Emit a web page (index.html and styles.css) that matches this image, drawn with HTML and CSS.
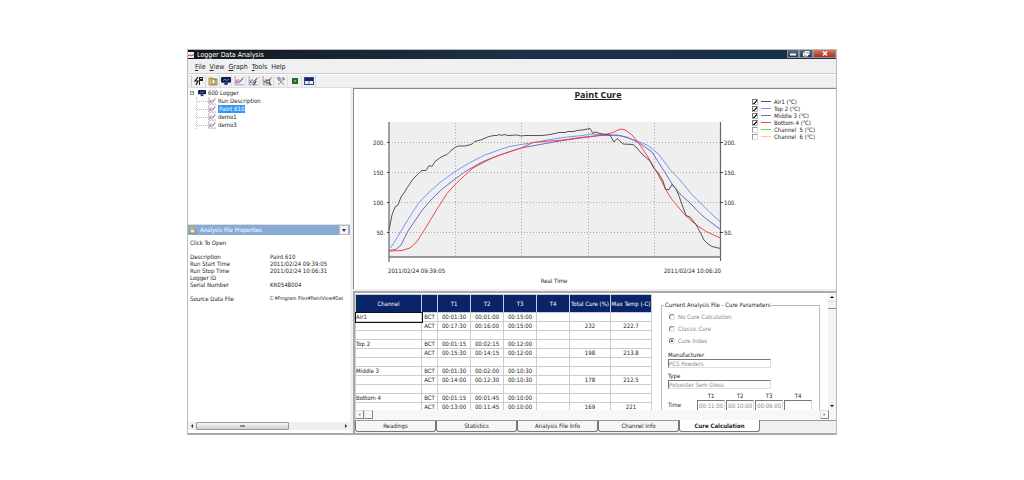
FILE: index.html
```html
<!DOCTYPE html>
<html lang="en">
<head>
    <meta charset="UTF-8">
    <meta name="viewport" content="width=device-width, initial-scale=1.0">
    <title>Logger Data Analysis</title>
    <link rel="stylesheet" href="styles.css">
</head>
<body>
    <svg class="defs" aria-hidden="true">
        <symbol id="graph" viewBox="0 0 9 9">
            <path d="M1 0v8h8" fill="none" stroke="#99a" stroke-width=".8" />
            <path d="M1.500 7l2-4 2 2 3-4" fill="none" stroke="#e06a5a" stroke-width=".9" />
            <path d="M1.500 4l2.500 2.500 4-4" fill="none" stroke="#4460cc" stroke-width=".9" />
        </symbol>
        <symbol id="logger" viewBox="0 0 9 9">
            <rect x="0" y="1" width="9" height="5" rx="1" fill="#111c50" />
            <path d="M2 4l1.500-1 1.500 1 2-1" fill="none" stroke="#5fc3a0" stroke-width=".8" />
            <path d="M3 6h3v2H3z" fill="#223070" />
        </symbol>
    </svg>

    <div class="window">
        <header class="title-bar">
            <svg class="app-icon" viewBox="0 0 6 6"><rect width="6" height="6" fill="#eef" /><path d="M0 4l2-1 2 1 2-2" fill="none" stroke="#c33" /></svg>
            <h1>Logger Data Analysis</h1>
            <div class="win-buttons">
                <button class="win-btn" aria-label="Minimize"><svg viewBox="0 0 8 7"><path d="M1 3.500h6v2H1z" fill="#fff" /></svg></button>
                <button class="win-btn restore" aria-label="Restore"><svg viewBox="0 0 8 7"><path d="M3 1.500h4v3H3zM1.500 3h4v3h-4z" fill="#889" stroke="#fff" /></svg></button>
                <button class="win-btn close" aria-label="Close"><svg viewBox="0 0 8 7"><path d="M2 1.500l4 4m0-4l-4 4" stroke="#fff" stroke-width="1.500" /></svg></button>
            </div>
        </header>

        <nav class="menu-bar">
            <a href="#"><u>F</u>ile</a>
            <a href="#"><u>V</u>iew</a>
            <a href="#"><u>G</u>raph</a>
            <a href="#"><u>T</u>ools</a>
            <a href="#">Help</a>
        </nav>

        <div class="toolbar">
            <button class="tool first" aria-label="Start"><svg viewBox="0 0 10 10"><path d="M4 1L1 5h3L2 9" fill="none" stroke="#111" stroke-width="1.200" /><path d="M5 1h4v4H6v4H5z" fill="#222" /><path d="M6.500 2h1.500v1H6.500z" fill="#fff" /></svg></button>
            <button class="tool" aria-label="Open"><svg viewBox="0 0 10 10"><path d="M1 2h3l1 1h4v6H1z" fill="#e9c763" stroke="#9a7a25" stroke-width=".8" /><rect x="4" y="3" width="3" height="5" fill="#fff" stroke="#555" stroke-width=".7" /></svg></button>
            <button class="tool plain" aria-label="Logger"><svg viewBox="0 0 9 9"><use href="#logger" /></svg></button>
            <button class="tool" aria-label="Graph"><svg viewBox="0 0 9 9"><use href="#graph" /></svg></button>
            <button class="tool" aria-label="Edit graph"><svg viewBox="0 0 9 9"><use href="#graph" /><path d="M5 8l2.500-3.500" stroke="#333" /></svg></button>
            <button class="tool" aria-label="Zoom graph"><svg viewBox="0 0 9 9"><use href="#graph" /><circle cx="5.500" cy="5" r="1.500" fill="#dde" stroke="#333" stroke-width=".8" /><path d="M6.500 6.500l1.500 1.500" stroke="#222" /></svg></button>
            <button class="tool" aria-label="Settings"><svg viewBox="0 0 10 10"><path d="M2 9l6-6M3 3l5 6" stroke="#888" /><path d="M1 2l2-1 2 2-2 2zM7 1l2 2-1 1-2-1z" fill="#9ab" stroke="#678" stroke-width=".5" /></svg></button>
            <button class="tool" aria-label="Stop"><svg viewBox="0 0 10 10"><rect x="2" y="2" width="6" height="6" fill="#246b2a" /><rect x="4" y="4" width="2" height="2" fill="#62b45e" /></svg></button>
            <button class="tool" aria-label="Window"><svg viewBox="0 0 10 10"><rect x=".5" y="1.500" width="9" height="7" fill="#e8ecfa" stroke="#34459c" /><path d="M1 2h8v3H1z" fill="#18246c" /><path d="M5 5v3" stroke="#6876b8" /></svg></button>
        </div>

        <main class="workspace">
            <aside class="sidebar">
                <ul class="tree">
                    <li>
                        <div class="tree-root"><span class="toggle">−</span><svg class="tree-icon"><use href="#logger" /></svg><span>600 Logger</span></div>
                        <ul>
                            <li><svg class="tree-icon"><use href="#graph" /></svg><span>Run Description</span></li>
                            <li><svg class="tree-icon"><use href="#graph" /></svg><span class="selected">Paint 610</span></li>
                            <li><svg class="tree-icon"><use href="#graph" /></svg><span>demo1</span></li>
                            <li><svg class="tree-icon"><use href="#graph" /></svg><span>demo3</span></li>
                        </ul>
                    </li>
                </ul>

                <section class="properties">
                    <div class="properties-head">
                        <svg viewBox="0 0 9 8"><path d="M2 3h5v4H2z" fill="#f1ead0" stroke="#77705a" stroke-width=".7" /><path d="M0 3l4-2 4 1-3 2z" fill="#dfa646" /></svg>
                        <h2>Analysis File Properties</h2>
                        <button class="drop" aria-label="Collapse"><svg viewBox="0 0 8 8"><path d="M2 3h4L4 6z" fill="#333" /></svg></button>
                    </div>
                    <div class="properties-body">
                        <p>Click To Open</p>
                        <dl>
                            <dt>Description</dt><dd>Paint 610</dd>
                            <dt>Run Start Time</dt><dd>2011/02/24 09:39:05</dd>
                            <dt>Run Stop Time</dt><dd>2011/02/24 10:06:31</dd>
                            <dt>Logger ID</dt><dd></dd>
                            <dt>Serial Number</dt><dd>KR0548004</dd>
                        </dl>
                        <dl>
                            <dt>Source Data File</dt><dd class="path">C:¥Program Files¥PaintView¥Dat</dd>
                        </dl>
                    </div>
                    <div class="side-scroll">
                        <svg viewBox="0 0 8 8"><path d="M5 2v4L3 4z" fill="#222" /></svg>
                        <div class="side-track"><div class="side-thumb"></div></div>
                        <svg viewBox="0 0 8 8"><path d="M3 2v4l2-2z" fill="#222" /></svg>
                    </div>
                </section>
            </aside>

            <div class="content">
                <section class="chart-panel">
                    <h2>Paint Cure</h2>
                    <svg class="chart" viewBox="354 101 398 188" role="img" aria-label="Paint Cure temperatures">
                        <rect x="389" y="122" width="332" height="135" fill="#efefef" />
                        <path class="grid" d="M389 142.500h332M389 172.500h332M389 202.500h332M389 232.500h332M455.500 123v134M521.500 123v134M588.500 123v134M654.500 123v134" />
                        <path d="M389 257h332" stroke="#777" stroke-width="1.500" />
                        <path d="M389 122v140M720.500 122v139" stroke="#666" stroke-width="1.200" />
                        <path d="M387 142.500h2M387 172.500h2M387 202.500h2M387 232.500h2M720 142.500h3M720 172.500h3M720 202.500h3M720 232.500h3" stroke="#444" />
                        <polyline class="line top" points="389,248.500 392,246 398,236 407,221 418,204 427,194 440,182.500 455,171.500 470,162.500 485,155 500,149.500 510,146.500 521,144.500 537,142 550,139.500 567,137 583,135.500 590,134 610,135 622,136 637,141 648,145.500 658,153.500 663,160 670,169.500 680,180 691,193.500 697,199.500 710,212.500 720.500,222" />
                        <polyline class="line middle" points="389,250.500 396,249.500 401,245 408,231 422,210.500 430,201 441,190 455,179 467,170.500 483,161.500 500,155 521,148 540,144.500 557,141.500 573,139 600,135.500 617,135 628,137.500 640,143.500 652,152 658,161.500 665,172.500 672,184 680,194 690,203 700,213.500 707,219.500 720.500,229.500" />
                        <polyline class="line bottom" points="389,251 402,250.500 410,248 417,241.500 424,230.500 437,209 447,193.500 457,182.500 473,168 493,157.500 510,151.500 521,148 533,142.500 550,141 563,140 580,137.500 603,135 613,132.500 618,130 622,129 626,130.500 632,135 638,142 648,157 657,172.500 668,193.500 672,199.500 685,215 697,225.500 707,232 720.500,238" />
                        <polyline class="line air" points="389,230 392,215 395,207 398,205 401,197 404,193 407,188 413,179 418,174 422,170.500 426,170.500 429,165.500 432,166.500 435,161.500 441,157 447,154.500 450,151.500 455,147.500 458,146 465,146 471,144.500 475,141.500 482,139.500 489,136.500 494,135.500 497,135.500 499,134.500 502,135.500 504,134.500 508,135.500 517,135 521,136 525,135.500 542,135.500 550,134.500 559,132.500 565,132.500 568,131.500 574,131.500 577,130.500 582,130 585,129.500 590,128.500 593,133.500 595,132 600,133.500 610,135 614,142 617,138.500 620,141 623,144 633,144.500 637,148 642,154 650,161 654,168.500 658,172.500 663,181 665.500,189.500 669,189.500 672,184.500 676,189 679,196 686,215.500 690,217 696,224.500 700,232 704,240 708,244 712,246.500 720.500,248.500" />
                        <g class="axis-text">
                            <g text-anchor="end">
                                <text x="385" y="145">200.</text>
                                <text x="385" y="175">150.</text>
                                <text x="385" y="205">100.</text>
                                <text x="385" y="235">50.</text>
                                <text x="721" y="273">2011/02/24 10:06:20</text>
                            </g>
                            <text x="724" y="145">200.</text>
                            <text x="724" y="175">150.</text>
                            <text x="724" y="205">100.</text>
                            <text x="724" y="235">50.</text>
                            <text x="388" y="273">2011/02/24 09:39:05</text>
                            <text x="554" y="283" text-anchor="middle">Real Time</text>
                        </g>
                    </svg>
                    <div class="chart-legend">
                        <label><input type="checkbox" checked><i class="key air"></i>Air1 (℃)</label>
                        <label><input type="checkbox" checked><i class="key top"></i>Top 2 (℃)</label>
                        <label><input type="checkbox" checked><i class="key middle"></i>Middle 3 (℃)</label>
                        <label><input type="checkbox" checked><i class="key bottom"></i>Bottom 4 (℃)</label>
                        <label><input type="checkbox"><i class="key ch5"></i>Channel&nbsp; 5 (℃)</label>
                        <label><input type="checkbox"><i class="key ch6"></i>Channel&nbsp; 6 (℃)</label>
                    </div>
                </section>

                <section class="cure-panel">
                    <div class="cure-view">
                        <div class="cure-scroll">
                            <table class="cure-table">
                                <thead>
                                    <tr><th class="c-channel">Channel</th><th class="c-kind"></th><th class="c-time">T1</th><th class="c-time">T2</th><th class="c-time">T3</th><th class="c-time">T4</th><th class="c-total">Total Cure (%)</th><th class="c-total">Max Temp (-C)</th></tr>
                                </thead>
                                <tbody>
                                    <tr><td class="name current">Air1</td><td>BCT</td><td>00:01:30</td><td>00:01:00</td><td>00:15:00</td><td></td><td></td><td></td></tr>
                                    <tr><td></td><td>ACT</td><td>00:17:30</td><td>00:16:00</td><td>00:15:00</td><td></td><td>232</td><td>222.7</td></tr>
                                    <tr><td></td><td></td><td></td><td></td><td></td><td></td><td></td><td></td></tr>
                                    <tr><td class="name">Top 2</td><td>BCT</td><td>00:01:15</td><td>00:02:15</td><td>00:12:00</td><td></td><td></td><td></td></tr>
                                    <tr><td></td><td>ACT</td><td>00:15:30</td><td>00:14:15</td><td>00:12:00</td><td></td><td>198</td><td>213.8</td></tr>
                                    <tr><td></td><td></td><td></td><td></td><td></td><td></td><td></td><td></td></tr>
                                    <tr><td class="name">Middle 3</td><td>BCT</td><td>00:01:30</td><td>00:02:00</td><td>00:10:30</td><td></td><td></td><td></td></tr>
                                    <tr><td></td><td>ACT</td><td>00:14:00</td><td>00:12:30</td><td>00:10:30</td><td></td><td>178</td><td>212.5</td></tr>
                                    <tr><td></td><td></td><td></td><td></td><td></td><td></td><td></td><td></td></tr>
                                    <tr><td class="name">Bottom 4</td><td>BCT</td><td>00:01:15</td><td>00:01:45</td><td>00:10:00</td><td></td><td></td><td></td></tr>
                                    <tr><td></td><td>ACT</td><td>00:13:00</td><td>00:11:45</td><td>00:10:00</td><td></td><td>169</td><td>221</td></tr>
                                </tbody>
                            </table>

                            <fieldset class="params">
                                <legend>Current Analysis File - Cure Parameters</legend>
                                <label class="choice"><input type="radio" name="cure" disabled>No Cure Calculation</label>
                                <label class="choice"><input type="radio" name="cure" disabled>Classic Cure</label>
                                <label class="choice"><input type="radio" name="cure" disabled checked>Cure Index</label>
                                <label class="field-label" for="maker">Manufacturer</label>
                                <input class="field" id="maker" type="text" value="PCS Powders" disabled>
                                <label class="field-label" for="type">Type</label>
                                <input class="field" id="type" type="text" value="Polyester Sem Gloss" disabled>
                                <div class="times">
                                    <span></span>
                                    <label for="t1">T1</label>
                                    <label for="t2">T2</label>
                                    <label for="t3">T3</label>
                                    <label for="t4">T4</label>
                                    <span class="times-name">Time</span>
                                    <input class="field" id="t1" type="text" value="00:11:00" disabled>
                                    <input class="field" id="t2" type="text" value="00:10:00" disabled>
                                    <input class="field" id="t3" type="text" value="00:09:00" disabled>
                                    <input class="field" id="t4" type="text" disabled>
                                </div>
                            </fieldset>
                        </div>
                        <div class="v-scroll">
                            <svg viewBox="0 0 8 8"><path d="M2 5h4L4 3z" fill="#111" /></svg>
                            <div class="v-thumb"></div>
                            <svg viewBox="0 0 8 8"><path d="M2 3h4L4 5z" fill="#111" /></svg>
                        </div>
                    </div>
                    <div class="h-scroll">
                        <button class="step" aria-label="Scroll left"><svg viewBox="0 0 8 8"><path d="M5 2v4L3 4z" fill="#888" /></svg></button>
                        <div class="h-thumb"></div>
                        <button class="step last" aria-label="Scroll right"><svg viewBox="0 0 8 8"><path d="M3 2v4l2-2z" fill="#888" /></svg></button>
                    </div>
                    <div class="tabs">
                        <button class="tab">Readings</button>
                        <button class="tab">Statistics</button>
                        <button class="tab">Analysis File Info</button>
                        <button class="tab">Channel Info</button>
                        <button class="tab active">Cure Calculation</button>
                    </div>
                </section>
            </div>
        </main>
    </div>
</body>
</html>
```
FILE: styles.css
```css
* {
    box-sizing: border-box;
}

body {
    margin: 0;
    height: 100vh;
    padding: 49px 16px 45px;
    display: flex;
    justify-content: center;
    background-color: white;
    color: #222;
    font-family: "DejaVu Sans Condensed", "Noto Sans", sans-serif;
    font-size: 6px;
    line-height: 8px;
}

h1, h2, p, ul, dl, dd {
    margin: 0;
    padding: 0;
    font-size: 6px;
    font-weight: normal;
}

button, input {
    margin: 0;
    padding: 0;
    border: 0;
    border-radius: 0;
    background: none;
    color: inherit;
    font: inherit;
}

svg {
    display: block;
}

.defs {
    position: absolute;
    width: 0;
    height: 0;
}

.window {
    width: 100%;
    max-width: 650px;
    display: flex;
    flex-direction: column;
    border: 1px solid #bbb;
    border-bottom: 2px solid #aaa;
    background-color: #f0f0f0;
}

/* Title bar */
.title-bar {
    display: flex;
    align-items: center;
    height: 9px;
    background: linear-gradient(90deg, #14181e, #1c3248 50%, #15304a);
    color: white;
}

.title-bar h1 {
    flex: 1;
    padding-left: 3px;
    font-size: 7px;
}

.app-icon {
    width: 6px;
    height: 6px;
}

.win-buttons {
    display: flex;
    align-self: flex-start;
}

.win-btn {
    width: 12px;
    height: 8px;
    border: 1px solid #8593a3;
    border-top: 0;
    background: linear-gradient(#61707f, #263a4e);
}

.win-btn.restore {
    width: 14px;
}

.win-btn.close {
    width: 23px;
    background: linear-gradient(#d57a66, #b52a14);
}

.win-btn svg {
    width: 8px;
    height: 7px;
    margin: 0 auto;
}

/* Menu and toolbar */
.menu-bar {
    display: flex;
    align-items: center;
    gap: 4px;
    height: 15px;
    padding: 1px 7px 0;
    border-bottom: 1px solid #ccc;
}

.menu-bar a {
    color: inherit;
    text-decoration: none;
    font-size: 7px;
}

.toolbar {
    display: flex;
    height: 14px;
    padding-left: 3px;
    border-top: 1px solid white;
    border-bottom: 1px solid #ddd;
}

.tool {
    width: 14px;
    border-right: 1px solid #ddd;
}

.tool.first {
    width: 15px;
    border-left: 1px solid #ccc;
}

.tool.plain {
    width: 12px;
}

.tool svg {
    width: 10px;
    height: 10px;
    margin: 0 auto;
}

/* Left side */
.workspace {
    flex: 1;
    display: flex;
    min-height: 0;
}

.sidebar {
    flex: 0 0 25%;
    display: flex;
    flex-direction: column;
    min-width: 0;
    background-color: white;
}

.tree {
    flex: 0 0 137px;
    padding: 1px 2px;
    border-bottom: 1px solid #ddd;
    list-style: none;
}

.tree ul {
    margin-left: 6px;
    padding-left: 0;
    border-left: 1px dotted #bbb;
    list-style: none;
}

.tree-root, .tree ul li {
    display: flex;
    align-items: center;
    height: 8px;
}

.tree ul li::before {
    content: "";
    width: 11px;
    border-top: 1px dotted #bbb;
}

.toggle {
    width: 4px;
    height: 4px;
    margin-right: 4px;
    border: 1px solid #999;
    font-size: 4px;
    line-height: 2px;
}

.tree-icon {
    width: 8px;
    height: 8px;
    margin-right: 2px;
}

.selected {
    padding: 0 1px;
    background-color: #3497f5;
    color: white;
}

.properties {
    flex: 1;
    display: flex;
    flex-direction: column;
    min-height: 0;
}

.properties-head {
    display: flex;
    align-items: center;
    height: 10px;
    background-color: #86acd6;
    color: white;
}

.properties-head > svg {
    width: 9px;
    height: 8px;
}

.properties-head h2 {
    flex: 1;
    padding-left: 3px;
}

.drop {
    width: 10px;
    height: 10px;
    margin-right: 1px;
    border: 1px solid #bbb;
    background-color: #f4f4f4;
}

.drop svg {
    width: 8px;
    height: 8px;
}

.properties-body {
    flex: 1;
    padding: 4px 0 4px 2px;
    line-height: 7px;
    overflow: hidden;
}

.properties-body dl {
    display: grid;
    grid-template-columns: 1fr 1fr;
    grid-auto-rows: 7px;
    margin-top: 7px;
    white-space: nowrap;
}

.properties-body .path {
    font-size: 5px;
}

.side-scroll {
    display: flex;
    align-items: center;
    height: 8px;
    margin-bottom: 3px;
    background-color: #eee;
}

.side-scroll svg {
    width: 8px;
    height: 8px;
}

.side-track {
    flex: 1;
}

.side-thumb {
    width: 64%;
    height: 8px;
    border: 1px solid #999;
    border-radius: 1px;
    background: linear-gradient(90deg, transparent 47%, #888 47%, #888 53%, transparent 53%) center / 100% 2px no-repeat, linear-gradient(#f6f6f6, #d0d0d0);
}

/* Chart */
.content {
    flex: 1;
    display: flex;
    flex-direction: column;
    min-width: 0;
    padding-left: 3px;
}

.chart-panel {
    display: grid;
    grid-template-columns: 1fr 84px;
    align-items: start;
    border-top: 1px solid #888;
    border-left: 1px solid #888;
    background-color: white;
}

.chart-panel h2 {
    grid-column: 1 / 3;
    padding-left: 6px;
    font-family: "Open Sans", sans-serif;
    font-size: 9px;
    font-weight: bold;
    line-height: 12px;
    text-align: center;
    text-decoration: underline;
}

.chart {
    width: 100%;
}

.grid {
    stroke: #aaa;
    stroke-dasharray: 1 2;
}

.line {
    fill: none;
    stroke-width: 1;
}

.line.air { stroke: #555; }
.line.top { stroke: #6f9cf3; }
.line.middle { stroke: #7c62c8; }
.line.bottom { stroke: #f6444a; }

.axis-text {
    fill: #222;
    font-size: 6px;
}

.chart-legend {
    display: flex;
    flex-direction: column;
    margin-top: -3px;
}

.chart-legend label {
    display: flex;
    align-items: center;
    height: 7px;
    white-space: nowrap;
}

.chart-legend input {
    appearance: none;
    width: 6px;
    height: 6px;
    border: 1px solid #999;
    border-right-color: #ddd;
    border-bottom-color: #ddd;
    background-color: white;
}

.chart-legend input:checked {
    background: linear-gradient(135deg, transparent 40%, #333 40%, #333 70%, transparent 70%);
    border-color: #777 #bbb #bbb #777;
}

.key {
    width: 10px;
    height: 1px;
    margin: 0 3px;
}

.key.air { background-color: #555; }
.key.top { background-color: #6f9cf3; }
.key.middle { background-color: #7c62c8; }
.key.bottom { background-color: #f6444a; }
.key.ch5 { background-color: #4df24d; }
.key.ch6 { background-color: #fbc4b4; }

/* Cure calculation */
.cure-panel {
    flex: 1;
    display: flex;
    flex-direction: column;
    min-height: 0;
    margin-top: 2px;
    border-top: 2px solid #aaa;
    border-left: 2px solid #aaa;
    background-color: white;
}

.cure-view {
    flex: 1;
    display: flex;
    min-height: 0;
}

.cure-scroll {
    flex: 1;
    display: flex;
    align-items: flex-start;
    gap: 9px;
    padding-top: 1px;
    overflow: hidden;
}

.cure-table {
    table-layout: fixed;
    width: 297px;
    flex: none;
    border-collapse: collapse;
    white-space: nowrap;
}

.cure-table th {
    height: 18px;
    padding: 0;
    border: 1px solid #c8cce0;
    background-color: #0a246a;
    color: white;
    font-weight: normal;
}

.cure-table td {
    height: 9px;
    padding: 0;
    border: 1px solid #ccc;
    line-height: 8px;
    text-align: center;
}

.cure-table .name {
    text-align: left;
}

.cure-table .current {
    outline: 1px solid #111;
}

.c-channel { width: 66px; }
.c-kind { width: 16px; }
.c-time { width: 33px; }
.c-total { width: 41px; }

.params {
    flex: 0 1 159px;
    min-width: 0;
    height: 140px;
    margin: 7px 0 0;
    padding: 1px 6px;
    border: 1px solid #bbb;
}

.params legend {
    padding: 0 1px;
    margin-left: -4px;
}

.choice {
    display: flex;
    align-items: center;
    gap: 3px;
    height: 12px;
    padding-left: 1px;
    color: #888;
}

.choice:first-of-type {
    margin-top: 1px;
}

.choice input {
    appearance: none;
    width: 6px;
    height: 6px;
    border: 1px solid #777;
    border-right-color: #ddd;
    border-bottom-color: #ddd;
    border-radius: 50%;
}

.choice input:checked {
    background: radial-gradient(#666 35%, transparent 45%);
}

.field-label {
    display: block;
    margin-top: 4px;
}

.field {
    display: block;
    width: 103px;
    height: 9px;
    border: 1px solid #777;
    border-right-color: #ddd;
    border-bottom-color: #ddd;
    background-color: white;
    color: #888;
}

.times {
    display: grid;
    grid-template-columns: 28px repeat(4, 28px);
    column-gap: 1px;
    margin-top: 3px;
    text-align: center;
}

.times-name {
    padding-top: 1px;
    text-align: left;
}

.times .field {
    width: 28px;
    height: 11px;
    padding-left: 1px;
}

.v-scroll {
    flex: 0 0 8px;
    display: flex;
    flex-direction: column;
    background-color: #f4f4f4;
}

.v-scroll svg {
    width: 8px;
    height: 8px;
}

.v-thumb {
    height: 8px;
    margin-bottom: auto;
    border-top: 1px solid #ddd;
    border-bottom: 1px solid #888;
}

.h-scroll {
    display: flex;
    height: 10px;
    padding-right: 7px;
    background-color: #f7f7f7;
}

.step {
    width: 9px;
    height: 9px;
    border: 1px solid #ddd;
    border-right-color: #888;
    border-bottom-color: #888;
}

.step.last {
    margin-left: auto;
}

.step svg {
    width: 7px;
    height: 7px;
}

.h-thumb {
    width: 9px;
    height: 9px;
    border: 1px solid #ddd;
    border-right-color: #888;
    border-bottom-color: #888;
}

.tabs {
    display: flex;
    height: 13px;
    border-top: 1px solid #999;
    background-color: #f0f0f0;
}

.tab {
    flex: 0 1 81px;
    height: 11px;
    border: 1px solid #777;
    border-top: 0;
    border-radius: 0 0 3px 3px;
    background-color: #f6f6f6;
}

.tab.active {
    height: 12px;
    margin-top: -1px;
    background-color: white;
    font-weight: bold;
}
```
